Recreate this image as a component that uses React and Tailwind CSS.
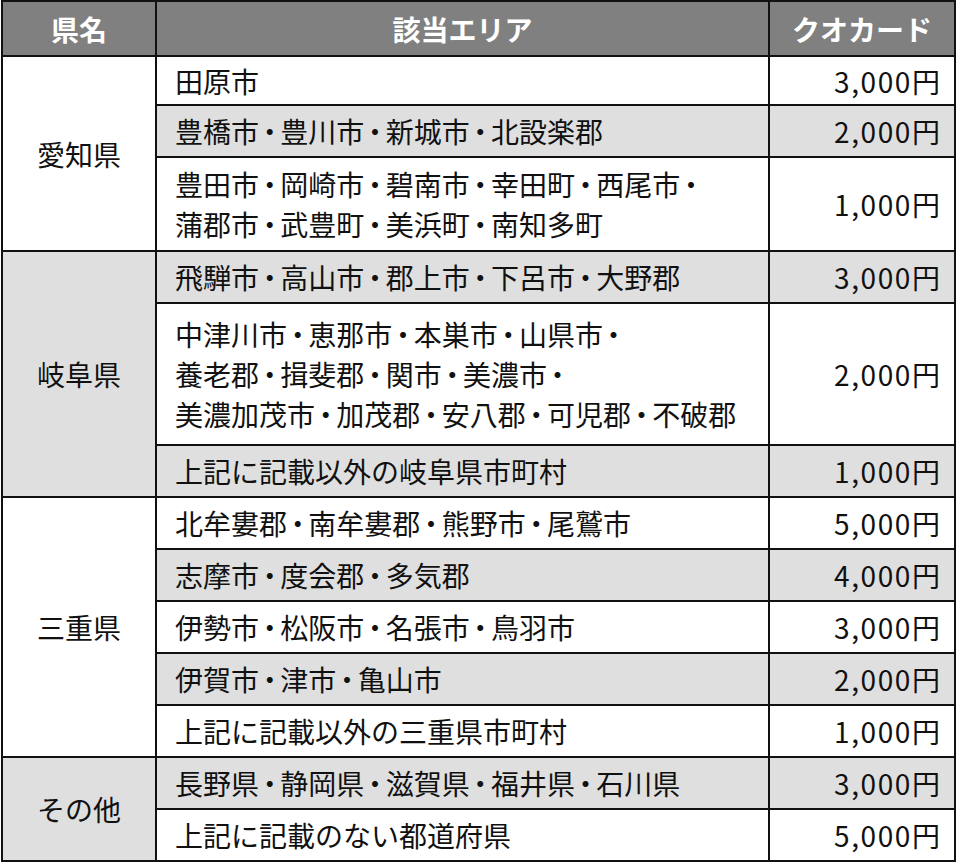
import React from "react";

const Dots = ({ text }) => {
  const parts = text.split("・");
  return (
    <>
      {parts.map((p, i) => (
        <React.Fragment key={i}>
          {p}
          {i < parts.length - 1 && <span className="mx-[-0.12em]">・</span>}
        </React.Fragment>
      ))}
    </>
  );
};

const groups = [
  {
    name: "愛知県",
    bg: "bg-white",
    rows: [
      { area: ["田原市"], amt: "3,000円", bg: "bg-white", h: "h-[49px]" },
      { area: ["豊橋市・豊川市・新城市・北設楽郡"], amt: "2,000円", bg: "bg-[#dfdfdf]", h: "h-[52px]" },
      {
        area: ["豊田市・岡崎市・碧南市・幸田町・西尾市・", "蒲郡市・武豊町・美浜町・南知多町"],
        amt: "1,000円",
        bg: "bg-white",
        h: "h-[94px]",
      },
    ],
  },
  {
    name: "岐阜県",
    bg: "bg-[#dfdfdf]",
    rows: [
      { area: ["飛騨市・高山市・郡上市・下呂市・大野郡"], amt: "3,000円", bg: "bg-[#dfdfdf]", h: "h-[52px]" },
      {
        area: ["中津川市・恵那市・本巣市・山県市・", "養老郡・揖斐郡・関市・美濃市・", "美濃加茂市・加茂郡・安八郡・可児郡・不破郡"],
        amt: "2,000円",
        bg: "bg-white",
        h: "h-[142px]",
      },
      { area: ["上記に記載以外の岐阜県市町村"], amt: "1,000円", bg: "bg-[#dfdfdf]", h: "h-[52px]" },
    ],
  },
  {
    name: "三重県",
    bg: "bg-white",
    rows: [
      { area: ["北牟婁郡・南牟婁郡・熊野市・尾鷲市"], amt: "5,000円", bg: "bg-white", h: "h-[52px]" },
      { area: ["志摩市・度会郡・多気郡"], amt: "4,000円", bg: "bg-[#dfdfdf]", h: "h-[52px]" },
      { area: ["伊勢市・松阪市・名張市・鳥羽市"], amt: "3,000円", bg: "bg-white", h: "h-[52px]" },
      { area: ["伊賀市・津市・亀山市"], amt: "2,000円", bg: "bg-[#dfdfdf]", h: "h-[52px]" },
      { area: ["上記に記載以外の三重県市町村"], amt: "1,000円", bg: "bg-white", h: "h-[52px]" },
    ],
  },
  {
    name: "その他",
    bg: "bg-[#dfdfdf]",
    rows: [
      { area: ["長野県・静岡県・滋賀県・福井県・石川県"], amt: "3,000円", bg: "bg-[#dfdfdf]", h: "h-[52px]" },
      { area: ["上記に記載のない都道府県"], amt: "5,000円", bg: "bg-white", h: "h-[52px]" },
    ],
  },
];

export default function App() {
  return (
    <div className="w-[956px] h-[864px] bg-white pl-[1px] font-['Noto_Sans_CJK_JP',sans-serif] text-[#111] text-[28px] leading-[40px]">
      <table className="w-[953px] table-fixed border-collapse border-2 border-[#111]">
        <colgroup>
          <col className="w-[154px]" />
          <col className="w-[613px]" />
          <col className="w-[186px]" />
        </colgroup>
        <thead>
          <tr className="h-[55px] bg-[#808080] text-white font-bold">
            <th className="border-2 border-[#111] text-center font-bold">県名</th>
            <th className="border-2 border-[#111] text-center font-bold">該当エリア</th>
            <th className="border-2 border-[#111] text-center font-bold">クオカード</th>
          </tr>
        </thead>
        <tbody>
          {groups.map((g) =>
            g.rows.map((r, i) => (
              <tr key={g.name + i} className={r.h}>
                {i === 0 && (
                  <td rowSpan={g.rows.length} className={`border-2 border-[#111] text-center align-middle ${g.bg}`}>
                    {g.name}
                  </td>
                )}
                <td className={`border-2 border-[#111] pl-[18px] align-middle whitespace-nowrap ${r.bg}`}>
                  {r.area.map((line, j) => (
                    <div key={j}>
                      <Dots text={line} />
                    </div>
                  ))}
                </td>
                <td className={`border-2 border-[#111] pr-[14px] text-right align-middle ${r.bg}`}>
                  <span className="tracking-[1.6px] mr-[-1.6px]">{r.amt}</span>
                </td>
              </tr>
            ))
          )}
        </tbody>
      </table>
    </div>
  );
}
